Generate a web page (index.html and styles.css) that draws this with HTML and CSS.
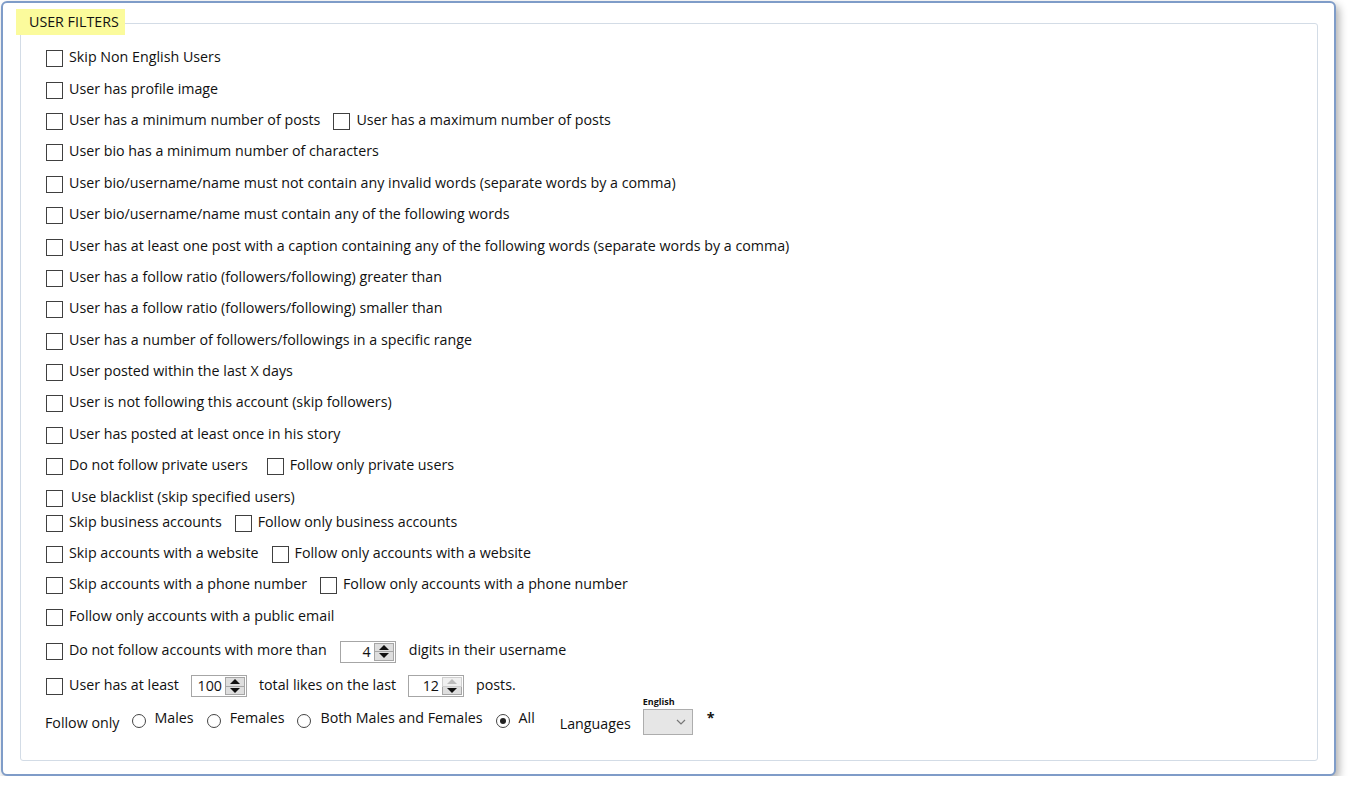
FILE: index.html
```html
<!DOCTYPE html>
<html>
<head>
<meta charset="utf-8">
<link rel="stylesheet" href="styles.css">
</head>
<body>
<div class="window">
  <div class="group">
    <div class="legend">USER FILTERS</div>
    <div class="rows">
      <div class="row"><label class="opt"><input type="checkbox"><span>Skip Non English Users</span></label></div>
      <div class="row"><label class="opt"><input type="checkbox"><span>User has profile image</span></label></div>
      <div class="row"><label class="opt"><input type="checkbox"><span>User has a minimum number of posts</span></label><label class="opt"><input type="checkbox"><span>User has a maximum number of posts</span></label></div>
      <div class="row"><label class="opt"><input type="checkbox"><span>User bio has a minimum number of characters</span></label></div>
      <div class="row"><label class="opt"><input type="checkbox"><span>User bio/username/name must not contain any invalid words (separate words by a comma)</span></label></div>
      <div class="row"><label class="opt"><input type="checkbox"><span>User bio/username/name must contain any of the following words</span></label></div>
      <div class="row"><label class="opt"><input type="checkbox"><span>User has at least one post with a caption containing any of the following words (separate words by a comma)</span></label></div>
      <div class="row"><label class="opt"><input type="checkbox"><span>User has a follow ratio (followers/following) greater than</span></label></div>
      <div class="row"><label class="opt"><input type="checkbox"><span>User has a follow ratio (followers/following) smaller than</span></label></div>
      <div class="row"><label class="opt"><input type="checkbox"><span>User has a number of followers/followings in a specific range</span></label></div>
      <div class="row"><label class="opt"><input type="checkbox"><span>User posted within the last X days</span></label></div>
      <div class="row"><label class="opt"><input type="checkbox"><span>User is not following this account (skip followers)</span></label></div>
      <div class="row"><label class="opt"><input type="checkbox"><span>User has posted at least once in his story</span></label></div>
      <div class="row wide"><label class="opt"><input type="checkbox"><span>Do not follow private users</span></label><label class="opt"><input type="checkbox"><span>Follow only private users</span></label></div>
      <div class="row"><label class="opt shifted"><input type="checkbox"><span>Use blacklist (skip specified users)</span></label></div>
      <div class="row up"><label class="opt"><input type="checkbox"><span>Skip business accounts</span></label><label class="opt"><input type="checkbox"><span>Follow only business accounts</span></label></div>
      <div class="row"><label class="opt"><input type="checkbox"><span>Skip accounts with a website</span></label><label class="opt"><input type="checkbox"><span>Follow only accounts with a website</span></label></div>
      <div class="row"><label class="opt"><input type="checkbox"><span>Skip accounts with a phone number</span></label><label class="opt"><input type="checkbox"><span>Follow only accounts with a phone number</span></label></div>
      <div class="row"><label class="opt"><input type="checkbox"><span>Follow only accounts with a public email</span></label></div>
      <div class="row down">
        <label class="opt"><input type="checkbox"><span>Do not follow accounts with more than</span></label>
        <div class="spin"><span class="val">4</span><span class="btns"><span class="b"><i class="tri-up"></i></span><span class="b"><i class="tri-dn"></i></span></span></div>
        <span class="txt">digits in their username</span>
      </div>
      <div class="row down snug">
        <label class="opt"><input type="checkbox"><span>User has at least</span></label>
        <div class="spin"><span class="val">100</span><span class="btns"><span class="b"><i class="tri-up"></i></span><span class="b"><i class="tri-dn"></i></span></span></div>
        <span class="txt">total likes on the last</span>
        <div class="spin"><span class="val">12</span><span class="btns"><span class="b disabled"><i class="tri-up"></i></span><span class="b"><i class="tri-dn"></i></span></span></div>
        <span class="txt">posts.</span>
      </div>
      <div class="row down last">
        <span class="follow-only">Follow only</span>
        <label class="radio"><input type="radio" name="g"><span>Males</span></label>
        <label class="radio"><input type="radio" name="g"><span>Females</span></label>
        <label class="radio"><input type="radio" name="g"><span>Both Males and Females</span></label>
        <label class="radio"><input type="radio" name="g" checked><span>All</span></label>
        <span class="lang-label">Languages</span>
        <div class="lang">
          <span class="lang-cap">English</span>
          <div class="combo"><svg width="10" height="6" viewBox="0 0 10 6"><path d="M1 1 L5 5 L9 1" fill="none" stroke="#777" stroke-width="1.2"/></svg></div>
        </div>
        <span class="star">*</span>
      </div>
    </div>
  </div>
</div>
</body>
</html>
```

FILE: styles.css
```css
html, body {
  margin: 0;
  padding: 0;
  background: #ffffff;
}
body {
  padding: 1px 0 0 1px;
  font-family: "Open Sans", "Noto Sans", sans-serif;
  font-size: 14.25px;
  color: #111;
}
.window {
  width: 1335px;
  height: 775px;
  box-sizing: border-box;
  border: 2px solid #7f9cc8;
  border-radius: 6px;
  background: #fff;
  box-shadow: 3px 4px 9px rgba(0, 0, 0, 0.32);
  padding: 20px 0 0 17px;
}
.group {
  position: relative;
  width: 1298px;
  height: 738px;
  box-sizing: border-box;
  border: 1px solid #d3dce6;
  border-radius: 3px;
  padding: 19px 0 0 25px;
}
.legend {
  position: absolute;
  left: -5px;
  top: -15px;
  height: 26px;
  line-height: 26px;
  padding: 0 6px 0 13px;
  background: #fbfb9c;
  color: #111;
}
.rows {
  display: flex;
  flex-direction: column;
}
.row {
  height: 31.4px;
  display: flex;
  align-items: center;
  gap: 13px;
}
.row.wide { gap: 19px; }
.row.snug { gap: 12px; }
.row.up { margin-top: -6.4px; }
.row.down { margin-top: 3px; }
.opt {
  display: flex;
  align-items: center;
  gap: 6px;
  white-space: nowrap;
}
.opt.shifted { gap: 8px; }
.opt span, .txt, .radio span, .follow-only, .lang-label {
  position: relative;
  top: -2px;
  white-space: nowrap;
}
input[type="checkbox"] {
  appearance: none;
  -webkit-appearance: none;
  margin: 0;
  width: 17px;
  height: 17px;
  box-sizing: border-box;
  border: 1px solid #404040;
  background: #fff;
  flex: none;
}
.spin {
  display: flex;
  width: 56px;
  height: 22px;
  box-sizing: border-box;
  border: 1px solid #a6a6a6;
  background: #fff;
  flex: none;
}
.spin .val {
  flex: 1;
  text-align: right;
  padding-right: 3px;
  line-height: 19px;
}
.btns {
  display: flex;
  flex-direction: column;
  width: 21px;
  flex: none;
  padding: 1px 1px 1px 0;
  box-sizing: border-box;
}
.b {
  flex: 1;
  background: #dedede;
  border: 1px solid #a6a6a6;
  display: flex;
  align-items: center;
  justify-content: center;
}
.b + .b { border-top: none; }
.tri-up, .tri-dn {
  width: 0;
  height: 0;
  border-left: 5px solid transparent;
  border-right: 5px solid transparent;
}
.tri-up { border-bottom: 5px solid #111; }
.tri-dn { border-top: 5px solid #111; }
.b.disabled { background: #f0f0f0; border-color: #cfcfcf; }
.b.disabled .tri-up { border-bottom-color: #bdbdbd; }
.row.last {
  gap: 0;
  margin-left: -1px;
}
.follow-only { top: 2px; margin-right: 12px; }
.radio {
  display: flex;
  align-items: center;
  gap: 9px;
  margin-right: 13px;
  white-space: nowrap;
}
.radio span { top: -3px; }
input[type="radio"] {
  appearance: none;
  -webkit-appearance: none;
  margin: 0;
  width: 14px;
  height: 14px;
  box-sizing: border-box;
  border: 1px solid #444;
  border-radius: 50%;
  background: #fff;
  position: relative;
  flex: none;
}
input[type="radio"]:checked::after {
  content: "";
  position: absolute;
  left: 3px;
  top: 3px;
  width: 6px;
  height: 6px;
  border-radius: 50%;
  background: #222;
}
.lang-label { top: 3px; margin-left: 12px; margin-right: 12px; }
.lang {
  display: flex;
  flex-direction: column;
  position: relative;
  top: -5px;
}
.lang-cap {
  font-size: 9px;
  font-weight: bold;
  line-height: 11px;
  height: 11px;
  margin-bottom: 2px;
  color: #111;
}
.combo {
  width: 50px;
  height: 26px;
  box-sizing: border-box;
  border: 1px solid #adadad;
  background: #e6e6e6;
  display: flex;
  align-items: center;
  justify-content: flex-end;
  padding-right: 6px;
}
.star {
  font-weight: bold;
  margin-left: 14px;
  position: relative;
  top: -3px;
}
```
